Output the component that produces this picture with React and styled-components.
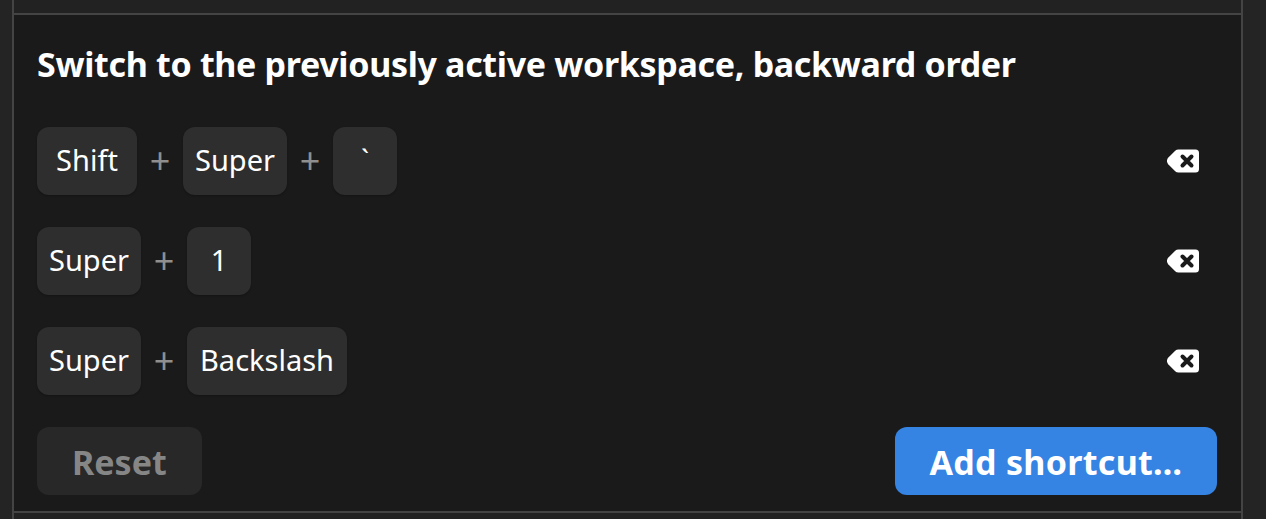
import React from 'react';
import styled, { createGlobalStyle } from 'styled-components';

const GlobalStyle = createGlobalStyle`
  html, body {
    margin: 0;
    padding: 0;
    height: 100%;
    overflow: hidden;
    background: #242424;
  }
`;

const Page = styled.div`
  height: 519px;
  box-sizing: border-box;
  padding: 0 23px 0 12px;
  font-family: 'Noto Sans', 'Open Sans', sans-serif;
  color: #fff;
`;

const List = styled.div`
  height: 100%;
  box-sizing: border-box;
  border-left: 2px solid #444;
  border-right: 2px solid #444;
  background: #222;
  padding-top: 13px;
`;

const Panel = styled.section`
  background: #1a1a1a;
  border-top: 2px solid #444;
  border-bottom: 2px solid #444;
  padding: 23px 24px 16px 23px;
  display: flex;
  flex-direction: column;
  gap: 32px;
`;

const Title = styled.h2`
  margin: 0 0 5px;
  font-size: 34px;
  line-height: 52px;
  font-weight: 700;
  letter-spacing: -0.32px;
`;

const Row = styled.div`
  display: flex;
  align-items: center;
  justify-content: space-between;
  height: 68px;
`;

const Keys = styled.div`
  display: flex;
  align-items: center;
`;

const Key = styled.kbd`
  box-sizing: border-box;
  height: 68px;
  min-width: ${p => p.$min || 64}px;
  padding: 0 12px;
  border-radius: 12px;
  background: #2e2e2e;
  box-shadow: 0 1px 2px rgba(0, 0, 0, 0.25);
  font-family: inherit;
  font-size: 29px;
  line-height: 66px;
  text-align: center;
`;

const Plus = styled.span`
  width: 46px;
  text-align: center;
  font-size: 36px;
  line-height: 68px;
  color: #8f8f8f;
`;

const Clear = styled.button`
  width: 32px;
  height: 24px;
  margin-right: 18px;
  padding: 0;
  border: 0;
  background: none;
  display: flex;
`;

const Actions = styled.div`
  display: flex;
  justify-content: space-between;
`;

const Button = styled.button`
  height: 68px;
  border: 0;
  border-radius: 12px;
  padding: 2px ${p => (p.$primary ? 34.5 : 35)}px 0;
  background: ${p => (p.$primary ? '#3584e4' : '#282828')};
  color: ${p => (p.$primary ? '#fff' : '#868686')};
  font-family: inherit;
  font-size: 34px;
  font-weight: 700;
  letter-spacing: ${p => (p.$primary ? 0.3 : 0)}px;
`;

const ClearIcon = () => (
  <svg width="32" height="24" viewBox="0 0 32 24">
    <path
      fill="#fff"
      d="M11.500 0.500H28.500A3.500 3.500 0 0 1 32 4V20A3.500 3.500 0 0 1 28.500 23.500H11.500A5 5 0 0 1 8.200 22.200L1.400 15.500A5 5 0 0 1 1.400 8.500L8.200 1.800A5 5 0 0 1 11.500 0.500Z"
    />
    <path stroke="#1a1a1a" strokeWidth="4" strokeLinecap="round" d="M15.500 7.500l9 9M24.500 7.500l-9 9" />
  </svg>
);

const rows = [
  [[['Shift', 100], ['Super'], ['`']], 0],
  [[['Super'], ['1']], 1],
  [[['Super'], ['Backslash', 160]], 2],
];

export default function App() {
  return (
    <Page>
      <GlobalStyle />
      <List>
        <Panel>
          <Title>Switch to the previously active workspace, backward order</Title>
          {rows.map(([keys, id]) => (
            <Row key={id}>
              <Keys>
                {keys.map(([label, min], i) => (
                  <React.Fragment key={label}>
                    {i > 0 && <Plus>+</Plus>}
                    <Key $min={min}>{label}</Key>
                  </React.Fragment>
                ))}
              </Keys>
              <Clear aria-label="Remove shortcut">
                <ClearIcon />
              </Clear>
            </Row>
          ))}
          <Actions>
            <Button disabled>Reset</Button>
            <Button $primary>Add shortcut…</Button>
          </Actions>
        </Panel>
      </List>
    </Page>
  );
}
